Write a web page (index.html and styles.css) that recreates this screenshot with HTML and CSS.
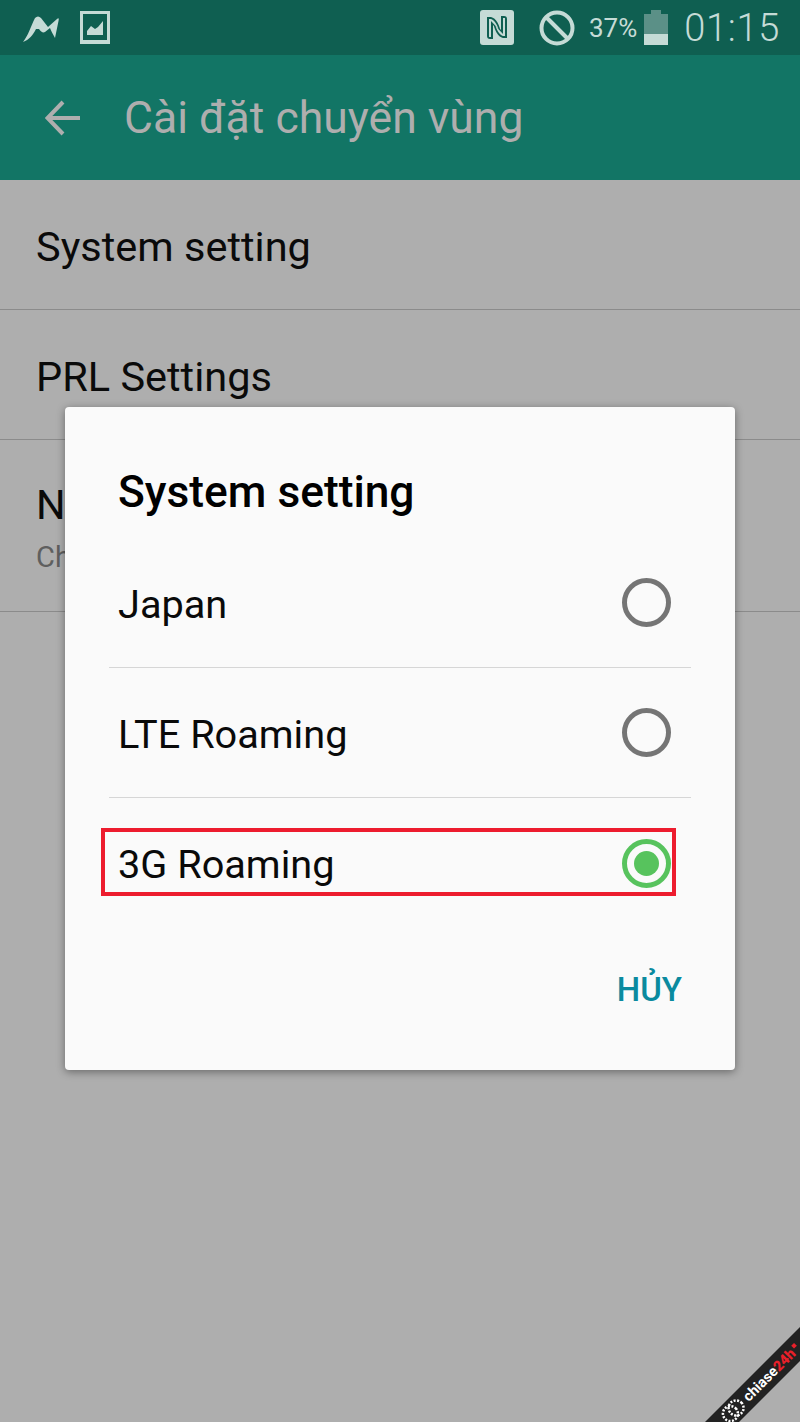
FILE: index.html
```html
<!DOCTYPE html>
<html lang="en">
<head>
    <meta charset="UTF-8">
    <meta name="viewport" content="width=device-width, initial-scale=1.0">
    <title>Cài đặt chuyển vùng</title>
    <link rel="stylesheet" href="styles.css">
</head>
<body>
    <div class="screen">
        <header>
            <div class="status-bar">
                <div class="status-left">
                    <svg class="icon-m" width="38" height="28" viewBox="0 0 38 28">
                        <path d="M1 28 C6 22 9 12 13 4 C15 2 17 2 19 4 L26 13 L35 5 C37 3 37 5 36.500 7 L33 24 C31 20 29 17 28 14 L23 18 C21 19 19 18 17 15 L14 15 C11 21 7 26 1 28 Z" fill="#c5dbd6"/>
                    </svg>
                    <svg class="icon-pic" width="30" height="33" viewBox="0 0 30 33">
                        <path d="M0 0H30V33H0Z M3 3V29H27V3Z" fill="#c5dbd6" fill-rule="evenodd"/>
                        <path d="M7 24 V20 L11 15 L15 18 L18 16 L23 10 V24 Z" fill="#c5dbd6"/>
                    </svg>
                </div>
                <div class="status-right">
                    <svg class="icon-nfc" width="34" height="35" viewBox="0 0 34 35">
                        <path d="M3 0H31C33 0 34 1 34 3V32C34 34 33 35 31 35H3C1 35 0 34 0 32V3C0 1 1 0 3 0Z" fill="#c5dbd6"/>
                        <path d="M7 7H11C16 8 20 15 21 24L13 15V29H10C8 29 7 28 7 26Z M27 28H23C18 27 14 20 13 11L21 20V6H24C26 6 27 7 27 9Z" fill="#0f5f51"/>
                        <path d="M9 9H11C14 10 17 14 18.500 19L11 11V27H9Z M25 26H23C20 25 17 21 15.500 16L23 24V8H25Z" fill="#c5dbd6"/>
                    </svg>
                    <svg class="icon-ban" width="36" height="36" viewBox="0 0 36 36">
                        <circle cx="18" cy="18" r="15.500" fill="none" stroke="#c5dbd6" stroke-width="4"/>
                        <path d="M7 7L29 29" stroke="#c5dbd6" stroke-width="4"/>
                    </svg>
                    <span class="battery-pct">37%</span>
                    <div class="battery">
                        <div class="battery-cap"></div>
                        <div class="battery-body"><div class="battery-level"></div></div>
                    </div>
                    <span class="clock">01:15</span>
                </div>
            </div>
            <div class="app-bar">
                <svg class="back" width="36" height="36" viewBox="0 0 36 36">
                    <path d="M35 18H3 M18 2L2.500 18L18 34" fill="none" stroke="#aeaeae" stroke-width="4"/>
                </svg>
                <h1>Cài đặt chuyển vùng</h1>
            </div>
        </header>

        <main>
            <div class="row">System setting</div>
            <div class="row">PRL Settings</div>
            <div class="row row-tall">
                <div>Network setting</div>
                <div class="row-sub">Choose network</div>
            </div>
        </main>

        <div class="dialog">
            <h2>System setting</h2>
            <ul class="options">
                <li><span>Japan</span><i class="radio"></i></li>
                <li><span>LTE Roaming</span><i class="radio"></i></li>
                <li class="selected"><span>3G Roaming</span><i class="radio radio-on"></i></li>
            </ul>
            <div class="dialog-actions"><button>HỦY</button></div>
        </div>

        <div class="watermark">
            <svg width="30" height="22" viewBox="0 0 30 22">
                <circle cx="11" cy="11" r="7.500" fill="none" stroke="#fff" stroke-width="2.500" stroke-dasharray="2 1.500"/>
                <circle cx="19" cy="11" r="7.500" fill="none" stroke="#fff" stroke-width="2.500" stroke-dasharray="2 1.500"/>
            </svg>
            <span class="watermark-text">chiase<b>24h</b></span>
            <i class="watermark-mark"></i>
        </div>
    </div>
</body>
</html>
```

FILE: styles.css
```css
/* Reset default styles */
body, h1, h2, ul, li, button {
    margin: 0;
    padding: 0;
    box-sizing: border-box;
}

body {
    font-family: Roboto, "Noto Sans", sans-serif;
    background-color: #aeaeae;
}

.screen {
    position: relative;
    width: 800px;
    height: 1422px;
    overflow: hidden;
}

/* Status bar */
.status-bar {
    display: flex;
    justify-content: space-between;
    align-items: center;
    height: 55px;
    padding: 0 20px 0 22px;
    background-color: #0f5f51;
    color: #c5dbd6;
}

.status-left, .status-right {
    display: flex;
    align-items: center;
}

.icon-pic {
    margin-left: 20px;
}

.icon-ban {
    margin-left: 25px;
}

.battery-pct {
    margin-left: 14px;
    font-size: 26px;
}

.battery {
    display: flex;
    flex-direction: column;
    align-items: center;
    margin-left: 7px;
}

.battery-cap {
    width: 10px;
    height: 4px;
    background-color: #5b9087;
}

.battery-body {
    display: flex;
    align-items: flex-end;
    width: 24px;
    height: 31px;
    background-color: #5b9087;
}

.battery-level {
    width: 100%;
    height: 11px;
    background-color: #c5dbd6;
}

.clock {
    margin-left: 16px;
    font-size: 38px;
    font-weight: 300;
    letter-spacing: 0.7px;
}

/* App bar */
.app-bar {
    display: flex;
    align-items: center;
    height: 125px;
    padding-left: 45px;
    background-color: #127565;
}

.app-bar h1 {
    margin-left: 43px;
    font-size: 44.500px;
    font-weight: 400;
    color: #aeaeae;
}

/* Settings list */
.row {
    display: flex;
    align-items: center;
    box-sizing: border-box;
    height: 130px;
    padding: 3px 0 0 36px;
    border-bottom: 1px solid #8b8b8b;
    font-size: 41.500px;
    color: #0a0a0a;
}

.row-tall {
    display: block;
    height: 172px;
    padding-top: 40px;
}

.row-sub {
    margin-top: 11px;
    font-size: 29px;
    color: #5f5f5f;
}

/* Dialog */
.dialog {
    position: absolute;
    top: 407px;
    left: 65px;
    box-sizing: border-box;
    width: 670px;
    height: 663px;
    padding: 0 44px;
    background-color: #fafafa;
    border-radius: 4px;
    box-shadow: 0 2px 8px rgba(0, 0, 0, 0.4);
}

.dialog h2 {
    height: 131px;
    padding: 57px 0 0 9px;
    font-size: 44.300px;
    font-weight: 500;
    line-height: 56px;
    color: #000;
}

.options {
    list-style-type: none;
}

.options li {
    position: relative;
    display: flex;
    justify-content: space-between;
    align-items: center;
    height: 130px;
    padding: 0 20px 0 9px;
    border-bottom: 1px solid #d6d6d6;
    font-size: 39.700px;
    color: #0a0a0a;
}

.options li span {
    margin-top: 3px;
}

.options li.selected {
    border-bottom: none;
}

.options li.selected::after {
    content: "";
    position: absolute;
    left: -8px;
    right: 15px;
    top: 30px;
    height: 68px;
    border: 4px solid #ed1c2e;
    box-sizing: border-box;
}

.radio {
    display: block;
    width: 49px;
    height: 49px;
    border: 5px solid #757575;
    border-radius: 50%;
    box-sizing: border-box;
}

.radio-on {
    position: relative;
    border-color: #57c35d;
}

.radio-on::after {
    content: "";
    position: absolute;
    top: 7px;
    left: 7px;
    width: 25px;
    height: 25px;
    border-radius: 50%;
    background-color: #57c35d;
}

.dialog-actions {
    display: flex;
    justify-content: flex-end;
    padding: 42px 9px 0 0;
}

.dialog-actions button {
    border: none;
    background: none;
    font-family: inherit;
    font-size: 33px;
    font-weight: 500;
    color: #0a8a9f;
}

/* Watermark */
.watermark {
    position: absolute;
    left: 680px;
    top: 1362px;
    display: flex;
    align-items: center;
    box-sizing: border-box;
    width: 180px;
    height: 24px;
    padding-left: 23px;
    background-color: #222;
    transform: rotate(-45deg);
    color: #fff;
}

.watermark-text {
    margin-left: 2px;
    font-size: 14.500px;
    font-weight: 700;
}

.watermark b {
    color: #e8202a;
}

.watermark-mark {
    width: 4px;
    height: 4px;
    margin: 0 0 6px 2px;
    background-color: #e8202a;
}
```
